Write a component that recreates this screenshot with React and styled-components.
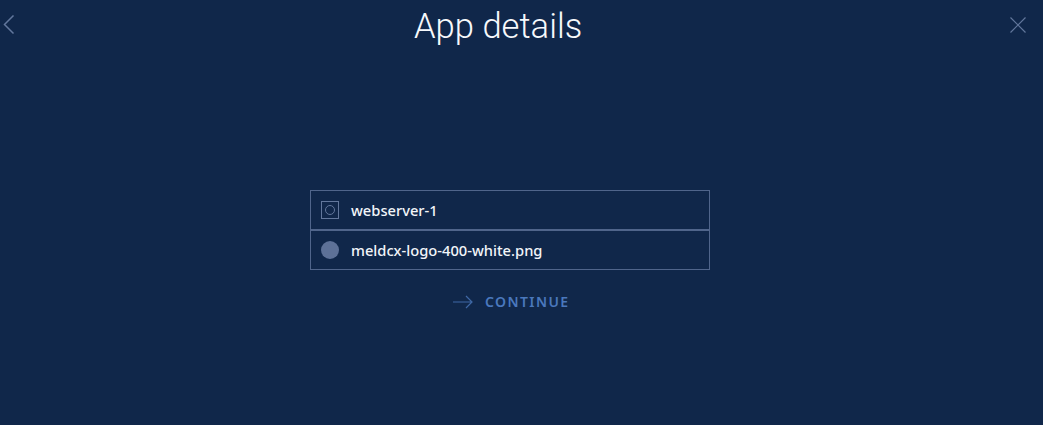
import styled, { createGlobalStyle } from 'styled-components';

const GlobalStyle = createGlobalStyle`
  html, body {
    margin: 0;
    height: 100%;
    background: #10274a;
    font-family: 'Noto Sans', 'Open Sans', sans-serif;
  }
`;

const rows = [
  { id: 'server', label: 'webserver-1', round: false },
  { id: 'file', label: 'meldcx-logo-400-white.png', round: true },
];

export default function App() {
  return (
    <>
      <GlobalStyle />
      <Page>
        <Header>
          <IconButton aria-label="Back">
            <svg width="12" height="20" viewBox="0 0 12 20" fill="none" stroke="#62779c" strokeWidth="1.5">
              <path d="M10.5 0.5 L1.5 9.5 L10.5 18.5" />
            </svg>
          </IconButton>
          <Title>App details</Title>
          <CloseButton aria-label="Close">
            <svg width="18" height="18" viewBox="0 0 18 18" fill="none" stroke="#62779c" strokeWidth="1.2">
              <path d="M1.5 1.5 L16.5 16.5 M16.5 1.5 L1.5 16.5" />
            </svg>
          </CloseButton>
        </Header>

        <Form>
          {rows.map((row) => (
            <Row key={row.id}>
              {row.round ? (
                <Dot />
              ) : (
                <Square>
                  <Ring />
                </Square>
              )}
              <Label>{row.label}</Label>
            </Row>
          ))}
          <Continue>
            <svg width="20" height="14" viewBox="0 0 20 14" fill="none" stroke="#3f68a6" strokeWidth="1.2">
              <path d="M0 7 H19 M13 1 L19 7 L13 13" />
            </svg>
            <ContinueLabel>CONTINUE</ContinueLabel>
          </Continue>
        </Form>
      </Page>
    </>
  );
}

const Page = styled.div`
  height: 425px;
  overflow: hidden;
  background: #10274a;
`;

const Header = styled.header`
  display: grid;
  grid-template-columns: 414px auto 1fr;
  align-items: center;
  height: 50px;
`;

const IconButton = styled.div`
  display: flex;
  align-items: center;
  padding-left: 3px;
`;

const CloseButton = styled.div`
  display: flex;
  justify-content: flex-end;
  padding-right: 16px;
`;

const Title = styled.h1`
  margin: 0;
  padding-top: 1px;
  font-family: Roboto, 'Noto Sans', sans-serif;
  font-size: 34.6px;
  font-weight: 300;
  line-height: 48px;
  color: #f7f9fc;
`;

const Form = styled.main`
  display: flex;
  flex-direction: column;
  width: 400px;
  margin: 140px 0 0 310px;
`;

const Row = styled.div`
  display: flex;
  align-items: center;
  gap: 12px;
  box-sizing: border-box;
  height: 40px;
  padding-left: 10px;
  border: 1px solid #50658b;
`;

const Square = styled.div`
  display: flex;
  align-items: center;
  justify-content: center;
  box-sizing: border-box;
  width: 18px;
  height: 18px;
  border: 1px solid #62779c;
`;

const Ring = styled.div`
  box-sizing: border-box;
  width: 10px;
  height: 10px;
  border: 1px solid #62779c;
  border-radius: 50%;
`;

const Dot = styled.div`
  width: 18px;
  height: 18px;
  border-radius: 50%;
  background: #5d7197;
`;

const Label = styled.span`
  margin-top: -1px;
  font-size: 14.7px;
  font-weight: 500;
  color: #f2f5f9;
`;

const Continue = styled.div`
  display: flex;
  align-items: center;
  gap: 12px;
  margin: 23px 0 0 143px;
  font-size: 14px;
  font-weight: 600;
  letter-spacing: 1.4px;
  color: #4a78bd;
`;

const ContinueLabel = styled.span`
  margin-top: -1px;
`;
